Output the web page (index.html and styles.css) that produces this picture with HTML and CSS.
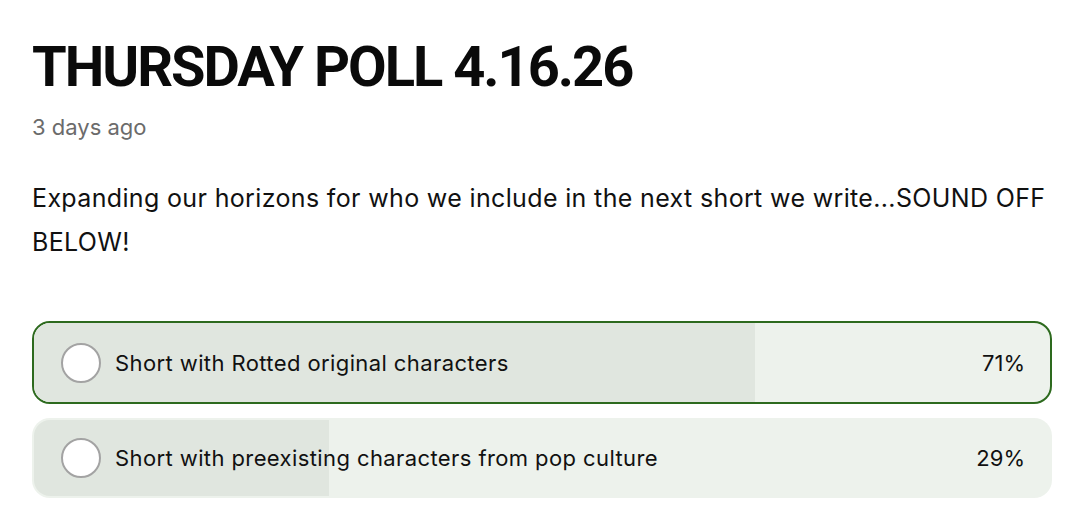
FILE: index.html
```html
<!DOCTYPE html>
<html lang="en">
<head>
    <meta charset="UTF-8">
    <title>Thursday Poll</title>
    <link rel="stylesheet" href="styles.css">
</head>
<body>

<div class="post">
    <h1 class="post-title">THURSDAY POLL 4.16.26</h1>
    <p class="post-date">3 days ago</p>
    <p class="post-body">Expanding our horizons for who we include in the next short we write...SOUND OFF BELOW!</p>

    <div class="poll">
        <div class="poll-option selected">
            <div class="poll-fill" style="width: 71%"></div>
            <span class="poll-radio"></span>
            <span class="poll-label">Short with Rotted original characters</span>
            <span class="poll-pct">71%</span>
        </div>
        <div class="poll-option">
            <div class="poll-fill" style="width: 29%"></div>
            <span class="poll-radio"></span>
            <span class="poll-label">Short with preexisting characters from pop culture</span>
            <span class="poll-pct">29%</span>
        </div>
    </div>
</div>

</body>
</html>
```

FILE: styles.css
```css
body {
    margin: 0;
    background: #fff;
    font-family: Inter, "Noto Sans", sans-serif;
    color: #111;
}
.post {
    padding: 35px 28px 0 32px;
}
.post-title {
    margin: 0;
    font-family: Roboto, Inter, sans-serif;
    font-size: 56px;
    line-height: 64px;
    font-weight: 700;
    letter-spacing: -2px;
    color: #0a0a0a;
}
.post-date {
    margin: 14px 0 0;
    font-size: 22px;
    line-height: 28px;
    color: #6b6b6b;
}
.post-body {
    margin: 35px 0 0;
    font-size: 25px;
    line-height: 44px;
    letter-spacing: 0.35px;
    color: #111;
}
.poll {
    display: flex;
    flex-direction: column;
    gap: 14px;
    margin-top: 57px;
}
.poll-option {
    position: relative;
    display: flex;
    align-items: center;
    gap: 14px;
    height: 76px;
    padding: 0 25px 0 27px;
    border: 2px solid transparent;
    border-radius: 18px;
    background: #edf2ec;
    overflow: hidden;
}
.poll-option.selected {
    height: 79px;
    border-color: #2d6a1e;
}
.poll-fill {
    position: absolute;
    left: 0;
    top: 0;
    bottom: 0;
    background: #e0e6df;
}
.poll-radio {
    position: relative;
    flex: none;
    width: 36px;
    height: 36px;
    border: 2px solid #a3a3a3;
    border-radius: 50%;
    background: #fff;
}
.poll-label {
    position: relative;
    flex: 1;
    font-size: 22px;
    letter-spacing: 0.4px;
    color: #111;
}
.poll-pct {
    position: relative;
    font-size: 22px;
    color: #111;
}
```
